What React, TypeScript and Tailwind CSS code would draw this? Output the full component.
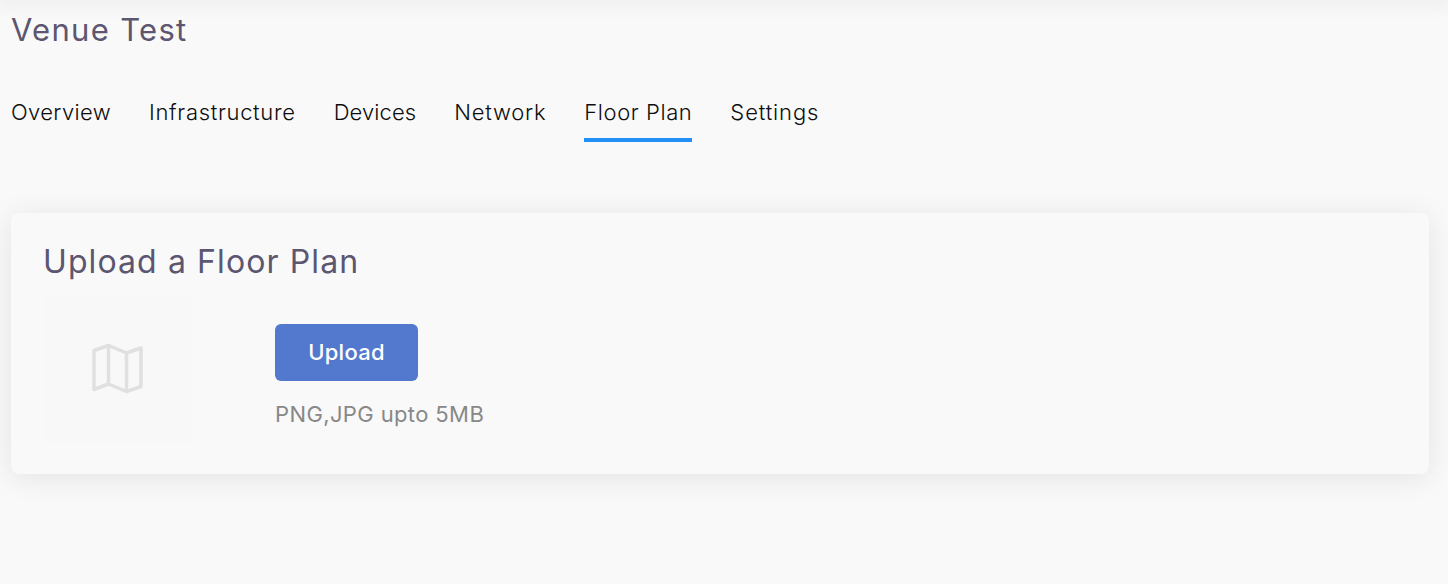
import React from "react";

const tabs = [
  { label: "Overview", cls: "tracking-[0.35px]" },
  { label: "Infrastructure", cls: "tracking-[0.68px]" },
  { label: "Devices", cls: "tracking-[0.1px]" },
  { label: "Network", cls: "tracking-[0.75px]" },
  { label: "Floor Plan", cls: "tracking-[0.58px] border-b-4 border-[#2191f5]" },
  { label: "Settings", cls: "tracking-[0.87px]" },
];

export default function App() {
  return (
    <div className="min-h-[584px] overflow-hidden bg-[#f9f9f9] font-['Inter','Liberation_Sans',sans-serif]">
      <div className="h-0 shadow-[0_0_18px_4px_rgba(0,0,0,0.09)]" />
      <div className="pl-[11px] pr-[19px]">
        <h1 className="pt-[11px] text-[31px] leading-[38px] tracking-[1.3px] text-[#5c5670]">Venue Test</h1>
        <nav className="mt-[39px] flex gap-[38px]">
          {tabs.map((t) => (
            <div key={t.label} className={"h-[54px] pt-[10px] text-[22px] leading-[28px] font-[350] text-[#0d0d0d] " + t.cls}>
              {t.label}
            </div>
          ))}
        </nav>
        <section className="mt-[71px] h-[261px] rounded-lg bg-[#f9f9f9] pl-8 pt-[28px] shadow-[0_4px_30px_rgba(0,0,0,0.09)]">
          <h2 className="text-[32px] leading-[42px] tracking-[1.1px] text-[#5c5670]">Upload a Floor Plan</h2>
          <div className="mt-[11px] flex">
            <div className="flex h-[150px] w-[149px] items-center justify-center rounded-md bg-[#f8f8f8]">
              <svg width="54" height="54" viewBox="0 0 54 54" fill="none" stroke="#e0e0e0" strokeWidth="3.5" strokeLinejoin="round" strokeLinecap="round">
                <path d="M3 8.5 17.5 3.5 35.5 11 50 6V44.5L35.5 49.5 17.5 42 3 47.5Z" />
                <path d="M17.5 3.5V42" />
                <path d="M35.5 11V49.5" />
              </svg>
            </div>
            <div className="ml-[83px] pt-[30px]">
              <button className="h-[57px] w-[143px] rounded-md bg-[#5379cf] text-[22px] font-[450] tracking-[0.25px] text-white">Upload</button>
              <p className="mt-[19px] text-[22px] leading-[28px] tracking-[0.38px] text-[#888888]">PNG,JPG upto 5MB</p>
            </div>
          </div>
        </section>
      </div>
    </div>
  );
}
